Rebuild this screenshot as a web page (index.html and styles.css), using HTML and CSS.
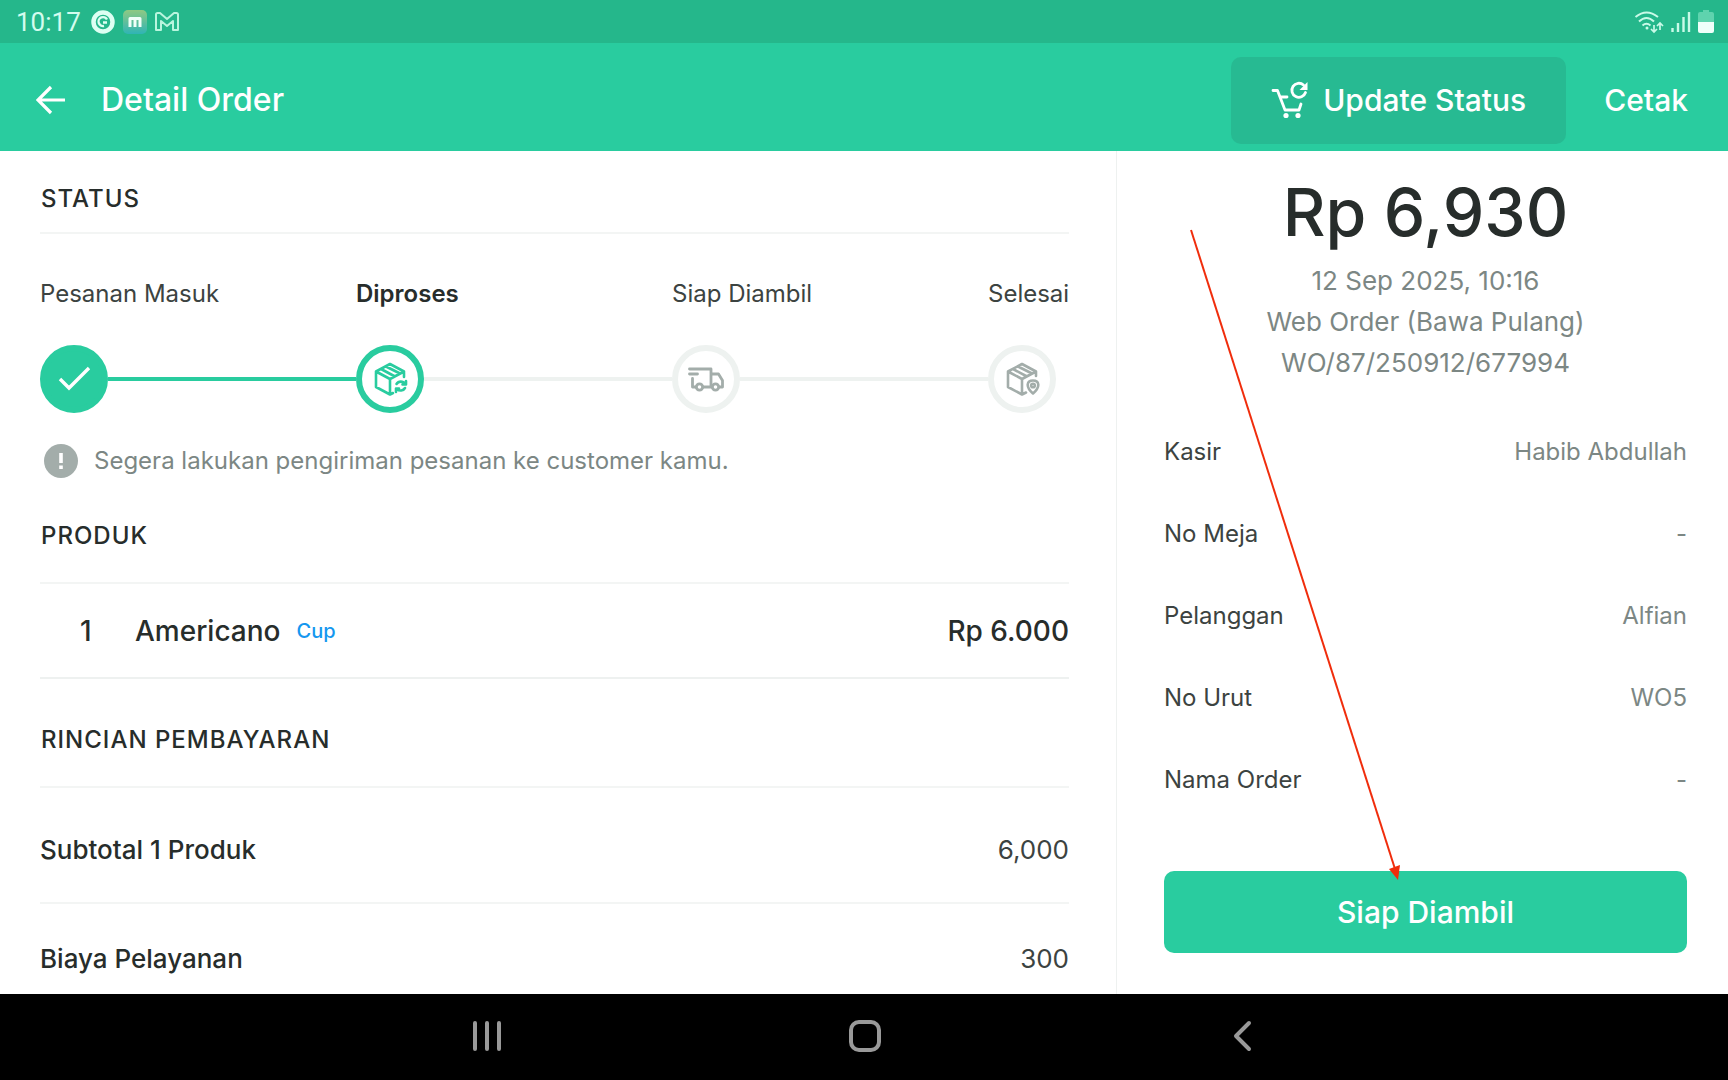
FILE: index.html
```html
<!DOCTYPE html>
<html lang="id">
<head>
<meta charset="utf-8">
<meta name="viewport" content="width=device-width, initial-scale=1">
<title>Detail Order</title>
<link rel="stylesheet" href="styles.css">
</head>
<body>
<div class="statusbar">
  <time class="clock">10:17</time>
  <svg class="status-icon" viewBox="0 0 24 24" aria-hidden="true"><circle cx="12" cy="12" r="9.500" fill="none" stroke="#ddfff3" stroke-width="4.500"/><path d="M12 12.500h4M16 9.500A4.500 4.500 0 1 0 13 16" fill="none" stroke="#ddfff3" stroke-width="2.400"/></svg>
  <svg class="status-icon app-icon" viewBox="0 0 24 24" aria-hidden="true"><defs><linearGradient id="tile" x1="0" y1="0" x2="0" y2="1"><stop offset="0" stop-color="#8fc983"/><stop offset="1" stop-color="#2fb4b5"/></linearGradient></defs><rect width="24" height="24" rx="5" fill="url(#tile)"/><path d="M7 17V8.500h10V17M12 8.500V17" fill="none" stroke="#f0fffa" stroke-width="3" stroke-linejoin="round"/></svg>
  <svg class="status-icon" viewBox="0 0 24 24" aria-hidden="true"><path d="M1 4.500Q1 3 2.500 3H5l7 6 7-6h2.500Q23 3 23 4.500V20h-5v-9l-6 5-6-5v9H1Z" fill="none" stroke="#b9f5de" stroke-width="2" stroke-linejoin="round"/></svg>
  <div class="signals">
    <svg class="wifi" viewBox="0 0 30 24" aria-hidden="true"><path d="M1.500 7Q12.500-2 24 7M5 11.500Q12.500 4.500 20 11.500M8.500 15.500Q12.500 12 16.500 15.500" fill="none" stroke="#c9fae8" stroke-width="2"/><circle cx="13" cy="18" r="1.500" fill="#c9fae8"/><path d="M20 15v7m-3-3 3 3 3-3M26 20v-7m-3 3 3-3 3 3" fill="none" stroke="#c9fae8" stroke-width="1.700"/></svg>
    <svg class="bars" viewBox="0 0 20 22" aria-hidden="true"><path d="M1.500 21v-4M7 21V12M12.500 21V6M18 21V1" stroke="#c9fae8" stroke-width="2.400"/></svg>
    <svg class="battery" viewBox="0 0 16 24" aria-hidden="true"><path d="M5 0h6v2h3q2 0 2 2v8H0V4q0-2 2-2h3Z" fill="#5fd3ae"/><path d="M0 12h16v9q0 2-2 2H2q-2 0-2-2Z" fill="#effffa"/></svg>
  </div>
</div>
<header class="appbar">
  <button class="back" type="button" aria-label="Kembali"><svg viewBox="0 0 30 30" aria-hidden="true"><path d="M29 15H2M15 2 2 15l13 13" fill="none" stroke="#fff" stroke-width="3.200"/></svg></button>
  <h1 class="title">Detail Order</h1>
  <button class="update" type="button"><svg viewBox="0 0 38 38" aria-hidden="true"><g fill="none" stroke="#fff" stroke-width="2.800" stroke-linecap="round" stroke-linejoin="round"><path d="M2 9.500h4.500L14 29h14l2-6M9 16h7"/><path d="M34.500 11.500A7 7 0 1 1 32.500 4"/></g><path d="M36.500 1v8h-8Z" fill="#fff"/><circle cx="15" cy="34.500" r="2.600" fill="#fff"/><circle cx="27" cy="34.500" r="2.600" fill="#fff"/></svg>Update Status</button>
  <button class="print" type="button">Cetak</button>
</header>
<main class="content">
  <div class="detail">
    <section>
      <h2 class="heading status-heading">STATUS</h2>
      <ol class="steps">
        <li class="step done"><span class="step-label">Pesanan Masuk</span><span class="track"><span class="dot"><svg viewBox="0 0 36 36" aria-hidden="true"><path d="m4 18 9 9L33 7" fill="none" stroke="#fff" stroke-width="3.400"/></svg></span></span></li>
        <li class="step current"><span class="step-label">Diproses</span><span class="track"><span class="dot"><svg viewBox="0 0 36 36" aria-hidden="true"><g fill="none" stroke="currentColor" stroke-width="2.600" stroke-linejoin="round" stroke-linecap="round"><path d="M32 16V10.500L18 3 4 10.500V26l14 7.500 3-1.500M4 10.500 18 18l14-7.500M18 18v15.500M9 8l14 7.500M14 5.500 28 12.500"/><path d="M24.500 23a5 5 0 0 1 8.500 0m1-3v3.500h-3.500M33 27a5 5 0 0 1-8 1m-1 3v-3.500h3"/></g></svg></span></span></li>
        <li class="step"><span class="step-label">Siap Diambil</span><span class="track"><span class="dot"><svg viewBox="0 0 36 36" aria-hidden="true"><g fill="none" stroke="currentColor" stroke-width="2.800" stroke-linejoin="round" stroke-linecap="round"><path d="M1.500 8H23v18H15M1.500 13h8M4.500 17.500V26H8M23 13h7.500l4 6.500V26h-3M23 26h1"/><circle cx="11.500" cy="26" r="3.200"/><circle cx="27.500" cy="26" r="3.200"/></g></svg></span></span></li>
        <li class="step last"><span class="step-label">Selesai</span><span class="track"><span class="dot"><svg viewBox="0 0 36 36" aria-hidden="true"><g fill="none" stroke="currentColor" stroke-width="2.600" stroke-linejoin="round" stroke-linecap="round"><path d="M32 15V10.500L18 3 4 10.500V26l14 7.500 4-2M4 10.500 18 18l14-7.500M18 18v15.500M9 8l14 7.500M14 5.500 28 12.500"/><path d="M29 32.500c-8-7-6-13 0-13s8 6 0 13Z"/><circle cx="29" cy="24.500" r="1.800"/></g></svg></span></span></li>
      </ol>
      <p class="note"><svg viewBox="0 0 34 34" aria-hidden="true"><circle cx="17" cy="17" r="17" fill="#a3adaa"/><path d="M17 9v10M17 21.500V25" stroke="#fff" stroke-width="3.600"/></svg>Segera lakukan pengiriman pesanan ke customer kamu.</p>
    </section>
    <section>
      <h2 class="heading">PRODUK</h2>
      <div class="product"><span class="qty">1</span><span class="name">Americano</span><span class="unit">Cup</span><span class="price">Rp 6.000</span></div>
    </section>
    <section>
      <h2 class="heading payment-heading">RINCIAN PEMBAYARAN</h2>
      <dl class="costs">
        <div class="cost"><dt>Subtotal 1 Produk</dt><dd>6,000</dd></div>
        <div class="cost"><dt>Biaya Pelayanan</dt><dd>300</dd></div>
      </dl>
    </section>
  </div>
  <aside class="summary">
    <p class="total">Rp 6,930</p>
    <p class="meta">12 Sep 2025, 10:16<br>Web Order (Bawa Pulang)<br>WO/87/250912/677994</p>
    <dl class="facts">
      <div class="fact"><dt>Kasir</dt><dd>Habib Abdullah</dd></div>
      <div class="fact"><dt>No Meja</dt><dd>-</dd></div>
      <div class="fact"><dt>Pelanggan</dt><dd>Alfian</dd></div>
      <div class="fact"><dt>No Urut</dt><dd>WO5</dd></div>
      <div class="fact"><dt>Nama Order</dt><dd>-</dd></div>
    </dl>
    <button class="ready" type="button">Siap Diambil</button>
    <svg class="pointer" viewBox="0 0 212 652" aria-hidden="true"><path d="M1 1 205 640" stroke="#f02d0c" stroke-width="2"/><path d="m199 640 11-4-2 15Z" fill="#f02d0c"/></svg>
  </aside>
</main>
<nav class="navbar" aria-label="Navigasi sistem">
  <button type="button" aria-label="Aplikasi terbaru"><svg viewBox="0 0 32 32" aria-hidden="true"><path d="M4 3v26M16 3v26M28 3v26"/></svg></button>
  <button type="button" aria-label="Beranda"><svg viewBox="0 0 32 32" aria-hidden="true"><rect x="2" y="2" width="28" height="28" rx="8"/></svg></button>
  <button type="button" aria-label="Kembali"><svg viewBox="0 0 32 32" aria-hidden="true"><path d="M22 3 9 16l13 13"/></svg></button>
</nav>
</body>
</html>
```
FILE: styles.css
```css
* { box-sizing: border-box; }
body, h1, h2, p, ol, dl, dd { margin: 0; padding: 0; }
body {
  display: flex;
  flex-direction: column;
  height: 100vh;
  font-family: Inter, "Liberation Sans", sans-serif;
  font-size: 24px;
  line-height: 32px;
  color: #3c4341;
  background: #fff;
}
button {
  border: 0;
  padding: 0;
  background: none;
  font: inherit;
  color: inherit;
  cursor: pointer;
}
svg { display: block; flex: none; }

.statusbar {
  display: flex;
  align-items: center;
  gap: 8px;
  flex: none;
  height: 43px;
  padding: 0 14px 0 16px;
  background: #25b78b;
}
.clock { font-family: Roboto, sans-serif; font-size: 26px; color: #d3fcee; margin-right: 2px; }
.status-icon { width: 24px; height: 24px; }
.signals { display: flex; align-items: center; gap: 7px; margin-left: auto; }
.wifi { width: 30px; height: 24px; }
.bars { width: 20px; height: 22px; }
.battery { width: 16px; height: 24px; }

.appbar {
  display: flex;
  align-items: center;
  flex: none;
  height: 108px;
  padding: 6px 40px 0 36px;
  background: #29cc9f;
  color: #fff;
  font-size: 30px;
  font-weight: 500;
}
.back svg { width: 30px; height: 30px; }
.title { margin-left: 35px; font-size: 32px; font-weight: 500; }
.update {
  display: flex;
  align-items: center;
  gap: 14px;
  height: 87px;
  margin: 0 38px 0 auto;
  padding: 0 40px;
  border-radius: 10px;
  background: #27ba92;
}
.update svg { width: 38px; height: 38px; }

.content { display: flex; flex: 1; min-height: 0; }
.detail { flex: 1; padding: 0 47px 0 40px; overflow: hidden; }
.heading {
  padding: 42px 0 30px 1px;
  border-bottom: 2px solid #f3f5f4;
  font-size: 24px;
  line-height: 32px;
  font-weight: 500;
  letter-spacing: 1px;
  color: #272d2b;
}
.status-heading { padding-top: 32px; padding-bottom: 17px; }
.payment-heading { padding-top: 45px; }
.steps {
  display: grid;
  grid-template-columns: 1fr 1fr 1fr 81px;
  padding: 44px 0 31px;
  list-style: none;
}
.step-label { display: block; white-space: nowrap; }
.track { display: flex; align-items: center; margin-top: 35px; color: #a3adaa; }
.track::after { content: ""; flex: 1; height: 4px; background: #eef2f0; }
.last .track::after { display: none; }
.dot {
  display: grid;
  place-items: center;
  width: 68px;
  height: 68px;
  border: 6px solid #eef2f0;
  border-radius: 50%;
}
.dot svg { width: 36px; height: 36px; }
.done .dot { border-color: #29cc9f; background: #29cc9f; }
.done .track::after { background: #29cc9f; }
.current .dot { border-color: #29cc9f; color: #29cc9f; }
.current .step-label { font-weight: 600; color: #272d2b; }
.note { display: flex; align-items: center; gap: 16px; padding-left: 4px; color: #7c8784; }
.note svg { width: 34px; height: 34px; }

.product {
  display: flex;
  align-items: center;
  height: 95px;
  border-bottom: 2px solid #eef1f0;
  font-size: 28px;
  font-weight: 500;
  color: #272d2b;
}
.qty { width: 95px; padding-left: 40px; }
.unit { margin-left: 16px; font-size: 20px; color: #1597ef; }
.price { margin-left: auto; }
.costs { padding-top: 7px; }
.cost {
  display: flex;
  align-items: center;
  justify-content: space-between;
  padding: 39px 0 36px;
  border-bottom: 2px solid #f3f5f4;
  font-size: 26px;
}
.cost dt { font-weight: 500; color: #272d2b; }

.summary {
  position: relative;
  width: 612px;
  padding: 17px 41px 0 47px;
  border-left: 1px solid #eef1f0;
}
.total { font-size: 66px; line-height: 88px; font-weight: 500; text-align: center; color: #272d2b; }
.meta { margin-top: 4px; font-size: 26px; line-height: 41px; text-align: center; color: #7c8784; }
.facts { display: grid; gap: 50px; margin-top: 53px; }
.fact { display: flex; justify-content: space-between; }
.fact dd { color: #7c8784; }
.ready {
  width: 100%;
  height: 82px;
  margin-top: 75px;
  border-radius: 10px;
  background: #29cc9f;
  color: #fff;
  font-size: 30px;
  font-weight: 500;
}
.pointer { position: absolute; left: 73px; top: 78px; width: 212px; height: 652px; pointer-events: none; }

.navbar {
  display: flex;
  align-items: center;
  justify-content: center;
  gap: 346px;
  flex: none;
  height: 86px;
  padding: 0 0 3px 2px;
  background: #000;
}
.navbar svg { width: 32px; height: 32px; fill: none; stroke: #999; stroke-width: 4; stroke-linecap: round; stroke-linejoin: round; }
```
